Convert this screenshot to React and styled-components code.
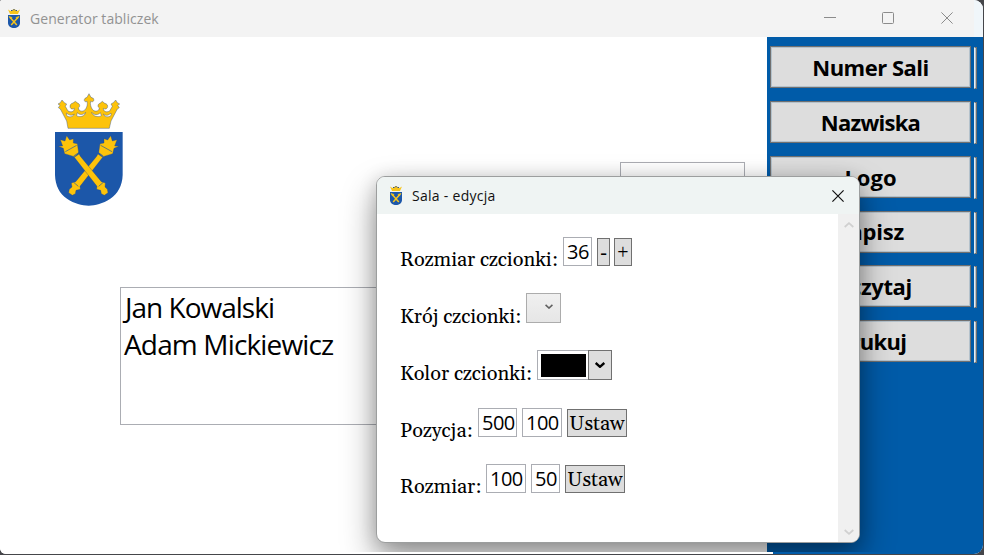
import React from "react";
import styled, { createGlobalStyle } from "styled-components";

const GlobalStyle = createGlobalStyle`
  * { box-sizing: border-box; }
  body {
    margin: 0;
    overflow: hidden;
    background: #45464a;
    font-family: "Open Sans", "Noto Sans", sans-serif;
    color: #000;
  }
`;

const Window = styled.main`
  position: relative;
  display: flex;
  flex-direction: column;
  width: 983px;
  height: 554px;
  overflow: hidden;
  border-radius: 2px 9px 9px 6px;
  background: #fff;
`;

const TitleBar = styled.header`
  display: flex;
  flex: none;
  align-items: center;
  height: 37px;
  padding-left: 8px;
  background: linear-gradient(90deg, #f3f3f3 974px, #f0f6fa 974px);
`;

const WindowTitle = styled.h1`
  flex: 1;
  margin: 0 0 0 10px;
  font-size: 14px;
  line-height: 20px;
  font-weight: 400;
  letter-spacing: 0.06px;
  color: #929292;
`;

const WindowControls = styled.div`
  display: flex;
  align-items: center;
  gap: 46px;
  margin: 0 30px 1px 0;
  color: #8b8b8b;

  svg:nth-child(-n + 2) {
    margin-left: -1px;
    margin-right: 1px;
  }
`;

const Body = styled.div`
  display: flex;
  flex: 1;
`;

const BottomEdge = styled.div`
  position: relative;
  z-index: 1;
  flex: none;
  height: 2px;
  background: linear-gradient(90deg, #fff 773px, #005ba8 773px);
`;

const Canvas = styled.section`
  position: relative;
  width: 767px;
  background: #fff;
`;

const LogoItem = styled.div`
  position: absolute;
  left: 54px;
  top: 56px;
  line-height: 0;
`;

const RoomBox = styled.div`
  position: absolute;
  left: 620px;
  top: 125px;
  width: 125px;
  height: 60px;
  border: 1px solid #abadb3;
`;

const NamesBox = styled.div`
  position: absolute;
  left: 120px;
  top: 250px;
  width: 400px;
  height: 138px;
  padding: 1px 3px;
  border: 1px solid #abadb3;
  font-size: 28px;
  line-height: 37px;
  letter-spacing: -0.85px;
`;

const FirstName = styled.div`
  padding-left: 1px;
  letter-spacing: -1px;
`;

const SidePanel = styled.aside`
  display: flex;
  flex: 1;
  background: #005ba8;
`;

const ButtonColumn = styled.nav`
  display: flex;
  flex-direction: column;
  gap: 12.75px;
  width: 207px;
  padding: 9.3px 3px 0;
`;

const PanelButton = styled.button`
  height: 42px;
  padding: 0 0 0.4px;
  border: 1px solid #707070;
  box-shadow: inset 0 0 0 1px #b4c2cc;
  background: #ddd;
  font: 700 22px/30px "Open Sans", "Noto Sans", sans-serif;
  letter-spacing: ${(p) => p.$spacing}px;
  color: #000;
`;

const EdgeColumn = styled.div`
  display: flex;
  flex-direction: column;
  gap: 12.75px;
  width: 3px;
  padding-top: 10.3px;
`;

const EdgeSlice = styled.span`
  height: 42px;
  border: 1px solid #707070;
  border-left-color: #e8eef2;
  background: #b4c2cc;
`;

const Dialog = styled.section`
  position: absolute;
  left: 376px;
  top: 176px;
  display: flex;
  flex-direction: column;
  width: 484px;
  height: 367px;
  overflow: hidden;
  border: 1px solid #9c9e9e;
  border-radius: 9px;
  background: #fff;
  box-shadow: 0 16px 34px rgba(0, 0, 0, 0.4), 0 2px 18px rgba(0, 0, 0, 0.16);
`;

const DialogHeader = styled.header`
  display: flex;
  flex: none;
  align-items: center;
  height: 37px;
  padding: 0 15px 0 13px;
  background: #eff4f3;
`;

const DialogTitle = styled.h2`
  flex: 1;
  margin: 1px 0 0 10px;
  font-size: 14px;
  line-height: 20px;
  font-weight: 400;
  letter-spacing: 0.28px;
  color: #111;
`;

const DialogBody = styled.div`
  display: flex;
  flex: 1;
`;

const Form = styled.div`
  display: flex;
  flex: 1;
  flex-direction: column;
  gap: 27px;
  padding: 22px 0 0 23px;
`;

const Row = styled.div`
  display: flex;
  align-items: flex-end;
  height: 30px;
  margin-top: ${(p) => p.$shift || 0}px;
`;

const Label = styled.label`
  width: ${(p) => p.$width}px;
  margin-bottom: -8px;
  font: 20px/28px Georgia, Gelasio, "Liberation Serif", serif;
  letter-spacing: -0.04px;
  white-space: nowrap;
`;

const NumberBox = styled.input`
  width: ${(p) => p.$width}px;
  height: 29px;
  margin-right: 5px;
  padding: 0 0 1px 3px;
  border: 1px solid #abadb3;
  outline: 0;
  background: #fff;
  font: 20px/26px "Open Sans", "Noto Sans", sans-serif;
  letter-spacing: -0.5px;
  color: #000;
`;

const FormButton = styled.button`
  width: ${(p) => p.$width}px;
  height: 28px;
  margin-right: 4px;
  padding: 2px 0 0;
  border: 1px solid #707070;
  background: #ddd;
  font: 20px/24px Georgia, Gelasio, "Liberation Serif", serif;
  color: #000;
`;

const StepButton = styled(FormButton)`
  padding-top: 0;
  font-family: "Liberation Serif", serif;
`;

const FontSelect = styled.div`
  display: flex;
  align-items: center;
  justify-content: flex-end;
  width: 35px;
  height: 30px;
  padding: 0 7px 3px 0;
  border: 1px solid #acacac;
  background: linear-gradient(#f0f0f0, #e6e6e6);
`;

const ColorPicker = styled.div`
  display: flex;
  width: 75px;
  height: 30px;
`;

const ColorWell = styled.span`
  width: 51px;
  padding: 3px 2px 2px 3px;
  border: 1px solid #abadb3;
  border-right: 0;
`;

const ColorFill = styled.span`
  display: block;
  width: 45px;
  height: 23px;
  background: #000;
`;

const ColorToggle = styled.span`
  display: flex;
  align-items: center;
  justify-content: center;
  width: 24px;
  border: 1px solid #707070;
  background: #ddd;
`;

const ScrollBar = styled.div`
  display: flex;
  flex-direction: column;
  align-items: center;
  justify-content: space-between;
  width: 21px;
  padding: 8px 0 7px;
  background: #f0f0f0;
`;

function Crest({ width, height }) {
  return (
    <svg width={width} height={height} viewBox="42 24 207 342" preserveAspectRatio="none">
      <path
        d="M45 141H248V270C247 302 233 327 211 341C188 356 166 361 146 362C126 361 103 356 81 341C59 327 46 302 45 270Z"
        fill="#1c57a9"
      />
      <g stroke="#35548a" strokeWidth="1.3" strokeLinejoin="round">
        <path
          d="M84 130L80 108L61 72L55 68L60 61L54 57L61 53L66 45L73 53L80 57L76 64L84 78C94 83 103 80 103 70C99 73 93 73 91 68C88 61 93 55 99 54L106 49L114 55C120 57 121 65 115 69C116 80 130 82 137 72C142 64 143 57 141 49C134 53 130 46 135 40L141 37L147 26L153 37L160 40C164 47 159 53 152 49C150 57 152 65 157 73C164 82 178 79 178 69C172 65 173 57 180 55L187 49L194 55C201 56 205 62 202 68C199 73 194 73 190 70C190 80 200 83 209 78L217 64L213 57L220 53L227 45L232 53L239 57L233 61L238 68L232 72L213 108L208 130Z"
          fill="#fdc30b"
        />
        <path
          d="M79 84C87 91 95 93 103 87C98 97 86 98 80 91ZM112 83C119 91 131 90 137 82C135 94 119 98 110 92ZM155 82C162 91 174 91 181 83L184 92C175 98 158 94 155 82ZM190 87C198 94 206 91 213 84L213 91C206 98 195 97 190 87Z"
          fill="#fff"
        />
      </g>
      <g fill="#fdc30b" stroke="#26477e" strokeWidth="1" strokeLinejoin="round">
        <path d="M174 207L188 217L120 304L121 313L108 316L106 326L97 331L86 323L88 313L96 306L94 294L107 290L169 215Z" />
        <path d="M237 184L224 183L231 164L217 168L212 152L203 165L192 161L192 174L180 176L176 203L189 215L218 206L222 190Z" />
        <path d="M117 207L103 217L171 304L170 313L182 316L184 326L193 331L204 323L202 313L195 306L196 294L184 290L122 215Z" />
        <path d="M55 184L68 183L61 164L75 168L80 152L89 165L100 161L100 174L112 176L116 203L103 215L74 206L70 190Z" />
      </g>
      <path
        d="M76 200L110 181M216 200L182 181M101 213L117 202M190 213L174 202M101 292L115 304M190 292L176 304"
        stroke="#1c57a9"
        strokeWidth="2"
      />
    </svg>
  );
}

function MiniCrest() {
  return (
    <svg width="12" height="19" viewBox="0 0 12 19">
      <path d="M0 .5L2.4 2L3.6 1.2L6 0L8.4 1.2L9.6 2L12 .5L10 5H2Z" fill="#f7c51c" />
      <path d="M3 1.5H4.5M7.5 1.5H9M5.3 .7H6.7" stroke="#35548a" />
      <path d="M0 6H12V14C12 17 9 19 6 19C3 19 0 17 0 14Z" fill="#1c57a9" />
      <path d="M2.6 9L8.8 16M9.4 9L3.2 16" stroke="#f7c51c" strokeWidth="1.5" />
      <path d="M1 7.5L4 8.5L2.6 10ZM11 7.5L8 8.5L9.4 10Z" fill="#f7c51c" stroke="#f7c51c" strokeWidth=".7" />
    </svg>
  );
}

function Chevron({ width, height, color, weight, up }) {
  return (
    <svg width={width} height={height} viewBox="0 0 10 6" preserveAspectRatio="none">
      <path d={up ? "M.7 5L5 1.2L9.3 5" : "M.7 1L5 4.8L9.3 1"} fill="none" stroke={color} strokeWidth={weight} />
    </svg>
  );
}

function Cross({ size, color, weight }) {
  return (
    <svg width={size} height={size} viewBox="0 0 12 12">
      <path d="M.4 .4L11.6 11.6M11.6 .4L.4 11.6" stroke={color} strokeWidth={weight} />
    </svg>
  );
}

const actions = [
  { text: "Numer Sali", spacing: -0.5 },
  { text: "Nazwiska", spacing: -0.75 },
  { text: "Logo", spacing: 0 },
  { text: "Zapisz", spacing: -0.2 },
  { text: "Wczytaj", spacing: -0.4 },
  { text: "Drukuj", spacing: -0.7 },
];

export default function App() {
  return (
    <>
      <GlobalStyle />
      <Window>
        <TitleBar>
          <MiniCrest />
          <WindowTitle>Generator tabliczek</WindowTitle>
          <WindowControls>
            <svg width="12" height="12" viewBox="0 0 12 12">
              <path d="M0 5.5H12" stroke="currentColor" />
            </svg>
            <svg width="12" height="12" viewBox="0 0 12 12">
              <rect x=".5" y=".5" width="11" height="11" rx="1" fill="none" stroke="currentColor" />
            </svg>
            <Cross size={12} color="currentColor" weight={1} />
          </WindowControls>
        </TitleBar>
        <Body>
          <Canvas>
            <LogoItem>
              <Crest width={69} height={114} />
            </LogoItem>
            <RoomBox />
            <NamesBox>
              <FirstName>Jan Kowalski</FirstName>
              Adam Mickiewicz
            </NamesBox>
          </Canvas>
          <SidePanel>
            <ButtonColumn>
              {actions.map((a) => (
                <PanelButton key={a.text} $spacing={a.spacing}>
                  {a.text}
                </PanelButton>
              ))}
            </ButtonColumn>
            <EdgeColumn>
              {actions.map((a) => (
                <EdgeSlice key={a.text} />
              ))}
            </EdgeColumn>
          </SidePanel>
        </Body>
        <BottomEdge />
        <Dialog>
          <DialogHeader>
            <MiniCrest />
            <DialogTitle>Sala - edycja</DialogTitle>
            <Cross size={12} color="#111" weight={1.2} />
          </DialogHeader>
          <DialogBody>
            <Form>
              <Row>
                <Label $width={163}>Rozmiar czcionki:</Label>
                <NumberBox $width={29} defaultValue="36" />
                <StepButton $width={13}>-</StepButton>
                <StepButton $width={18}>+</StepButton>
              </Row>
              <Row>
                <Label $width={126}>Krój czcionki:</Label>
                <FontSelect>
                  <Chevron width={8} height={5} color="#606060" weight={2} />
                </FontSelect>
              </Row>
              <Row>
                <Label $width={137}>Kolor czcionki:</Label>
                <ColorPicker>
                  <ColorWell>
                    <ColorFill />
                  </ColorWell>
                  <ColorToggle>
                    <Chevron width={10} height={6} color="#000" weight={2.4} />
                  </ColorToggle>
                </ColorPicker>
              </Row>
              <Row>
                <Label $width={78}>Pozycja:</Label>
                <NumberBox $width={39} defaultValue="500" />
                <NumberBox $width={40} defaultValue="100" />
                <FormButton $width={60}>Ustaw</FormButton>
              </Row>
              <Row $shift={-1}>
                <Label $width={86}>Rozmiar:</Label>
                <NumberBox $width={40} defaultValue="100" />
                <NumberBox $width={29} defaultValue="50" />
                <FormButton $width={60}>Ustaw</FormButton>
              </Row>
            </Form>
            <ScrollBar>
              <Chevron up width={10} height={6} color="#d0d0d0" weight={1.8} />
              <Chevron width={10} height={6} color="#d0d0d0" weight={1.8} />
            </ScrollBar>
          </DialogBody>
        </Dialog>
      </Window>
    </>
  );
}
